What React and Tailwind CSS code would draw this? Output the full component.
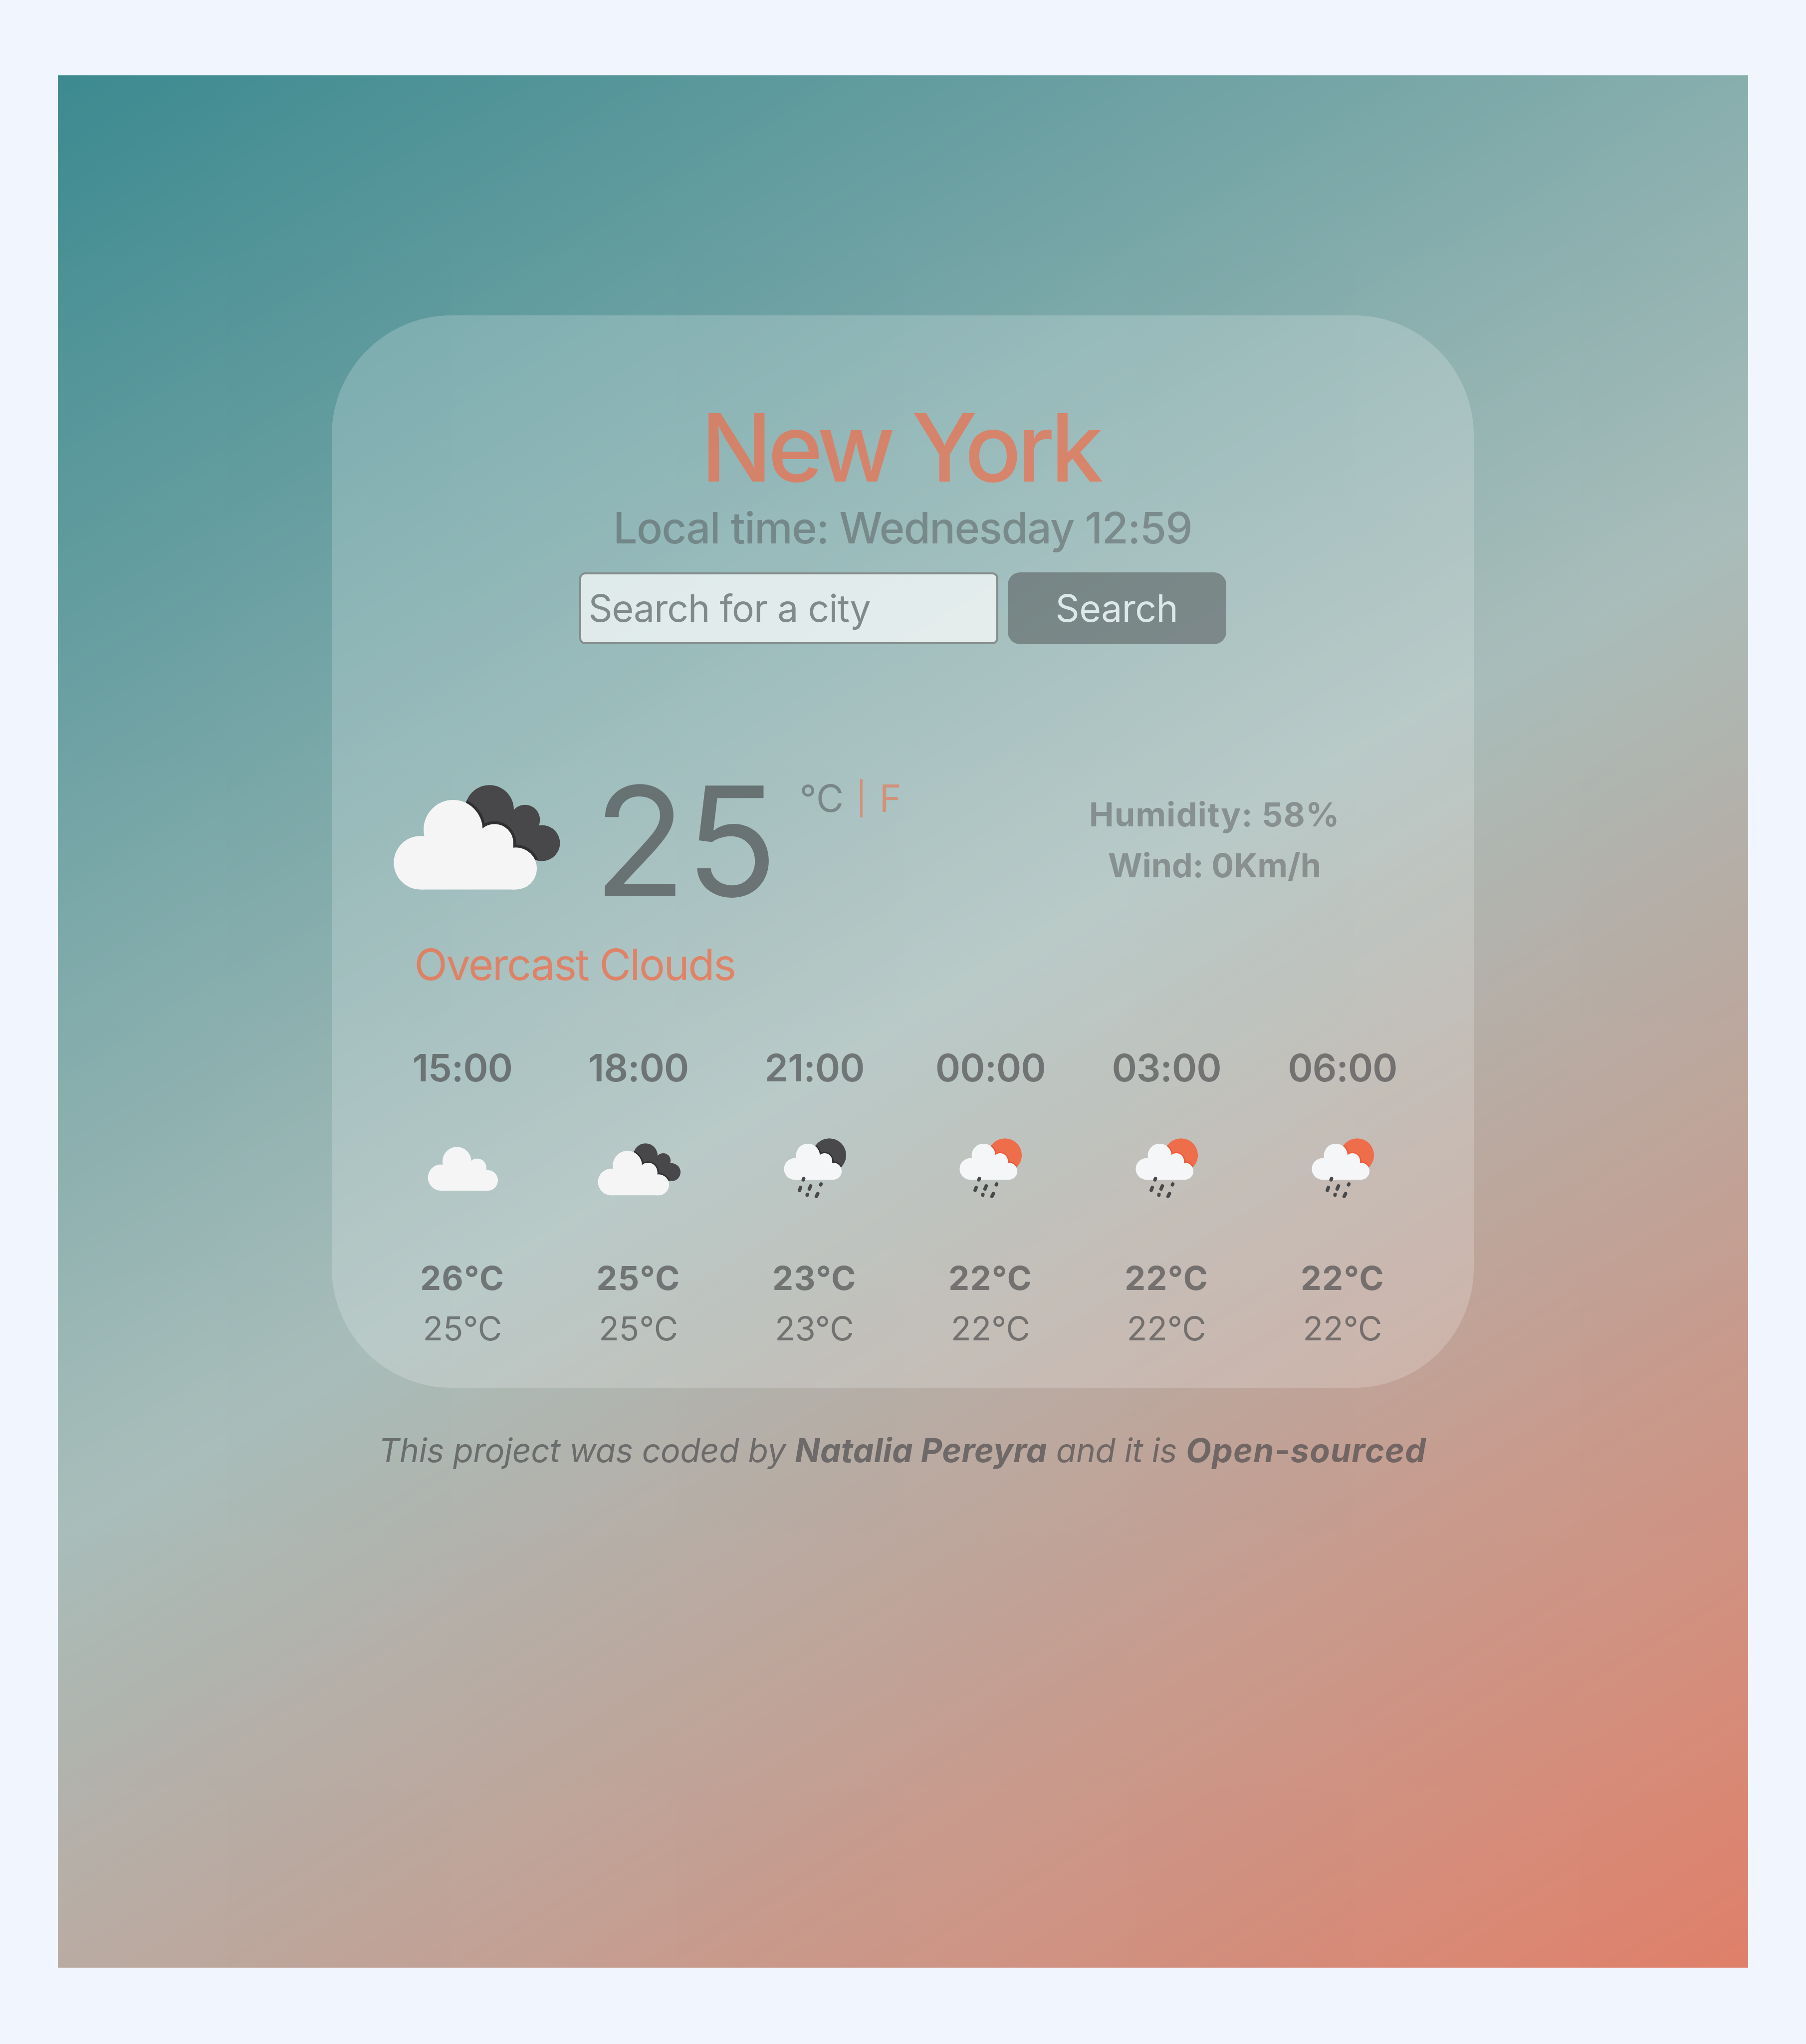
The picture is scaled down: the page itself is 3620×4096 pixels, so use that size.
const forecast = [
  { hour: "15:00", icon: "cloud", max: "26", min: "25" },
  { hour: "18:00", icon: "clouds", max: "25", min: "25" },
  { hour: "21:00", icon: "rainNight", max: "23", min: "23" },
  { hour: "00:00", icon: "rainDay", max: "22", min: "22" },
  { hour: "03:00", icon: "rainDay", max: "22", min: "22" },
  { hour: "06:00", icon: "rainDay", max: "22", min: "22" },
];

function CloudShape() {
  return (
    <>
      <circle cx="353" cy="757" r="210" />
      <circle cx="608" cy="496" r="231" />
      <circle cx="933" cy="600" r="147" />
      <circle cx="1100" cy="802" r="165" />
      <rect x="353" y="600" width="727" height="367" />
      <rect x="1070" y="760" width="30" height="207" />
      <rect x="480" y="500" width="360" height="400" />
    </>
  );
}

function BackShape() {
  return (
    <>
      <circle cx="893" cy="339" r="191" />
      <circle cx="1172" cy="420" r="117" />
      <circle cx="1305" cy="603" r="141" />
      <path d="M893 400 L1172 400 L1300 600 L1260 730 L1000 730 Z" />
    </>
  );
}

function TwoClouds({ id }) {
  return (
    <g>
      <clipPath id={id}>
        <BackShape />
      </clipPath>
      <g fill="#484749">
        <BackShape />
      </g>
      <g clipPath={`url(#${id})`} fill="#303032" stroke="#303032" strokeWidth="44">
        <CloudShape />
      </g>
      <g fill="#f5f5f5">
        <CloudShape />
      </g>
    </g>
  );
}

function Rain({ id, color, rim }) {
  return (
    <>
      <clipPath id={id}>
        <circle cx="158.3" cy="61" r="44" />
      </clipPath>
      <circle cx="158.3" cy="61" r="44" fill={color} />
      <g clipPath={`url(#${id})`}>
        <g transform="translate(20.5 -5) scale(.1345)" fill={rim} stroke={rim} strokeWidth="50">
          <CloudShape />
        </g>
      </g>
      <g transform="translate(20.5 -5) scale(.1345)" fill="#f5f6f8">
        <CloudShape />
      </g>
      <g transform="translate(23.3 0) scale(.3333)" stroke="#49494b" strokeLinecap="round" strokeWidth="27">
        <path d="M204 366L200 376M179 436L171 458M258 424L248 448M340 409L337 415M232 490L231 496M314 484L303 506" />
      </g>
    </>
  );
}

function ForecastIcon({ kind, id }) {
  return (
    <svg viewBox="0 0 240 190" className="mt-[83px] h-[146px] w-[184px]">
      {kind === "cloud" && (
        <g transform="translate(6.2 -4.1) scale(.1632)" fill="#f5f5f5">
          <CloudShape />
        </g>
      )}
      {kind === "clouds" && (
        <g transform="translate(-9.9 5.5) scale(.1657)">
          <TwoClouds id={id} />
        </g>
      )}
      {kind === "rainNight" && <Rain id={id} color="#49484a" rim="#303032" />}
      {kind === "rainDay" && <Rain id={id} color="#ee6d4a" rim="#ee5a38" />}
    </svg>
  );
}

export default function App() {
  return (
    <div className="h-[4096px] w-[3620px] bg-[#f1f6fe] px-[116px] pt-[151px] font-[Inter,sans-serif] text-[rgba(72,72,74,0.65)]">
      <div className="flex h-[3792px] flex-col items-center bg-[linear-gradient(149deg,#3c8a90_0%,#a8bdba_50%,#e0806a_100%)] pt-[481px] pr-[2px]">
        <main className="flex h-[2149px] w-[2289px] flex-col rounded-[240px] bg-white/20 px-[86px] pt-[170px]">
          <h1 className="pr-[10px] text-center text-[188.5px] leading-[188px] font-medium tracking-[-8.6px] text-[rgba(240,108,72,0.7)]">
            New York
          </h1>
          <h2 className="mt-[17px] text-center text-[86px] leading-[103px] font-medium tracking-[-1.5px] text-[rgba(72,72,74,0.44)]">
            Local time: Wednesday 12:59
          </h2>
          <form className="mt-[37px] flex h-[144px] justify-center gap-[19px]">
            <input
              type="text"
              placeholder="Search for a city"
              className="w-[840px] rounded-[12px] border-4 border-[#838e8d] bg-white/70 pl-[15px] text-[75px] tracking-[-1px] placeholder:text-[#7f8a8a]"
            />
            <button
              type="button"
              className="w-[438px] rounded-[25px] bg-[rgba(72,72,74,0.48)] text-[75px] tracking-[-0.5px] text-[#dde8e8]"
            >
              Search
            </button>
          </form>
          <section className="mt-[280px] flex h-[230px] items-start pl-[35px]">
            <svg viewBox="130 140 1330 840" className="h-[215px] w-[340px] shrink-0">
              <TwoClouds id="current" />
            </svg>
            <div className="mt-[7px] ml-[64px] w-[413px] text-[304.7px] leading-[215px] tracking-[-1.5px]">25</div>
            <div className="flex text-[75.5px] leading-[57px] text-[rgba(240,108,72,0.58)]">
              <span className="w-[111px] text-[rgba(72,72,74,0.48)]">°C</span>
              <span className="flex w-[26px] justify-center text-[64px]">|</span>
              <span className="ml-[23px]">F</span>
            </div>
            <div className="mt-[11px] mr-[86px] ml-auto w-[694px] text-center text-[66.2px] leading-[101.5px] font-bold text-[rgba(72,72,74,0.44)]">
              <div className="tracking-[1.4px]">Humidity: 58%</div>
              <div>Wind: 0Km/h</div>
            </div>
          </section>
          <p className="mt-[80px] pl-[80px] text-[86.6px] leading-[104px] tracking-[-2.35px] text-[rgba(240,108,72,0.75)]">
            Overcast Clouds
          </p>
          <section className="mt-[108px] grid grid-cols-6">
            {forecast.map((f) => (
              <div key={f.hour} className="flex flex-col items-center">
                <div className="text-[76px] leading-[92px] font-semibold tracking-[-0.8px]">{f.hour}</div>
                <ForecastIcon kind={f.icon} id={`f${f.hour.slice(0, 2)}`} />
                <div className="mt-[97px] text-[66.4px] leading-[101px] font-bold tracking-[1.5px]">{f.max}°C</div>
                <div className="text-[66.4px] leading-[101px]">{f.min}°C</div>
              </div>
            ))}
          </section>
        </main>
        <footer className="mt-[75px] text-[66px] leading-[100px] whitespace-pre italic text-[rgba(72,72,74,0.66)]">
          <span className="tracking-[-0.33px]">This project was coded by </span>
          <strong className="font-bold tracking-[0.28px]">Natalia Pereyra</strong>
          <span className="tracking-[-0.4px]"> and it is </span>
          <strong className="font-bold tracking-[1.3px]">Open-sourced</strong>
        </footer>
      </div>
    </div>
  );
}
